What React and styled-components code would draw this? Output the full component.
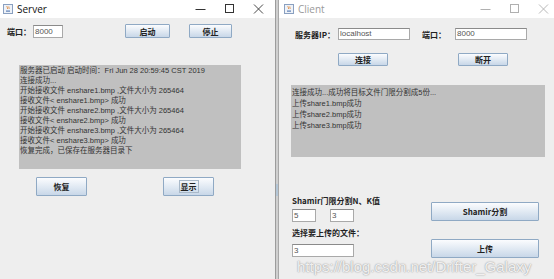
import React from "react";
import styled, { createGlobalStyle } from "styled-components";

const GlobalStyle = createGlobalStyle`
  html, body {
    margin: 0;
    padding: 0;
    background: #eeeeee;
  }
  body {
    font-family: "Liberation Sans", "Noto Sans CJK SC", sans-serif;
  }
`;

const Screen = styled.div`
  position: relative;
  width: 554px;
  height: 279px;
  display: flex;
  overflow: hidden;
  background: #eeeeee;
`;

const Window = styled.div`
  width: ${(p) => p.$width}px;
  display: flex;
  flex-direction: column;
`;

const TitleBar = styled.div`
  height: 18px;
  background: #ffffff;
  display: flex;
  align-items: center;
  padding-left: ${(p) => p.$pad}px;
  box-sizing: border-box;
`;

const TitleText = styled.span`
  margin-left: 4px;
  font-family: "Open Sans", "Liberation Sans", sans-serif;
  font-size: 10px;
  color: ${(p) => (p.$inactive ? "#9a9a9a" : "#111")};
  flex: 1;
`;

const Controls = styled.div`
  display: flex;
  align-items: center;
  gap: 18px;
  margin-right: ${(p) => p.$right}px;
`;

const Body = styled.div`
  flex: 1;
  background: #eeeeee;
  display: flex;
  flex-direction: column;
`;

const Divider = styled.div`
  width: 4px;
  background: #cfcfcf;
  border-left: 1px solid #9c9c9c;
  border-right: 1px solid #a8a8a8;
  box-sizing: border-box;
  display: flex;
  flex-direction: column;
`;

const DividerMark = styled.div`
  margin-top: 184px;
  height: 12px;
  background: #b4c6d6;
`;

const Row = styled.div`
  display: flex;
  align-items: center;
  margin-top: ${(p) => p.$top || 0}px;
  padding-left: ${(p) => p.$left || 0}px;
`;

const Label = styled.span`
  font-family: "Noto Sans CJK SC", sans-serif;
  font-weight: 700;
  font-size: 8px;
  color: #222;
  width: ${(p) => (p.$w ? p.$w + "px" : "auto")};
  margin-left: ${(p) => p.$ml || 0}px;
  white-space: nowrap;
`;

const Field = styled.div`
  width: ${(p) => p.$w}px;
  height: ${(p) => p.$h || 12}px;
  box-sizing: border-box;
  background: #fff;
  border: 1px solid #a9a9a9;
  border-top-color: #8a8a8a;
  font-family: "Liberation Sans", sans-serif;
  font-size: 8px;
  color: #555;
  padding-left: 1px;
  line-height: ${(p) => (p.$h || 12) - 2}px;
  margin-left: ${(p) => p.$ml || 0}px;
`;

const Button = styled.div`
  width: ${(p) => p.$w}px;
  height: ${(p) => p.$h}px;
  margin-left: ${(p) => p.$ml || 0}px;
  box-sizing: border-box;
  border: 1px solid #8fa9c4;
  border-radius: 1px;
  background: linear-gradient(#fbfcfe, #dfe8f2 55%, #c8d7e8);
  display: flex;
  align-items: center;
  justify-content: center;
  font-family: "Noto Sans CJK SC", sans-serif;
  font-weight: 700;
  font-size: 8px;
  color: #222;
`;

const Focus = styled.span`
  outline: 1px solid #a8b8c8;
  padding: 0 1px;
`;

const LogArea = styled.div`
  width: ${(p) => p.$w}px;
  height: ${(p) => p.$h}px;
  margin-left: ${(p) => p.$left}px;
  margin-top: ${(p) => p.$top}px;
  background: #c0c0c0;
  padding: ${(p) => p.$pt}px 0 0 1px;
  box-sizing: border-box;
  font-family: "Liberation Sans", "Noto Sans CJK SC", sans-serif;
  font-size: 7.5px;
  line-height: ${(p) => p.$lh}px;
  color: #333;
`;

const Line = styled.div`
  white-space: nowrap;
`;

const Lower = styled.div`
  display: flex;
  margin-top: 38px;
  padding-left: 13px;
`;

const FormCol = styled.div`
  display: flex;
  flex-direction: column;
  width: 139px;
`;

const ButtonCol = styled.div`
  display: flex;
  flex-direction: column;
  gap: 18px;
  padding-top: 7px;
`;

const Watermark = styled.div`
  position: absolute;
  left: 297px;
  top: 258px;
  font-family: "Liberation Sans", sans-serif;
  font-size: 15px;
  color: rgba(255, 255, 255, 0.85);
  text-shadow: 0 0 1px #9a9a9a, 0 0 2px #b0b0b0;
  white-space: nowrap;
`;

function JavaIcon() {
  return (
    <svg width="10" height="10" viewBox="0 0 10 10">
      <rect x="0.5" y="0.5" width="9" height="9" fill="#eef2f8" stroke="#8aa0c0" />
      <path d="M3 6.5h4v1.2H3z" fill="#5b7fb5" />
      <path d="M4 2c-0.5 1 1 1.5 0.5 3M5.8 2.5c-0.4 0.8 0.7 1.2 0.3 2.4" stroke="#e07b22" strokeWidth="0.8" fill="none" />
    </svg>
  );
}

function WinControls({ inactive, right }) {
  const c = inactive ? "#b0b0b0" : "#333";
  return (
    <Controls $right={right}>
      <svg width="11" height="10" viewBox="0 0 11 10">
        <path d="M0.5 5.5h10" stroke={c} strokeWidth="1" />
      </svg>
      <svg width="11" height="10" viewBox="0 0 11 10">
        <rect x="1.5" y="0.5" width="8" height="8" fill="none" stroke={c} strokeWidth="1" />
      </svg>
      <svg width="11" height="10" viewBox="0 0 11 10">
        <path d="M1 0.5l9 9M10 0.5l-9 9" stroke={c} strokeWidth="0.9" />
      </svg>
    </Controls>
  );
}

const serverLog = [
  "服务器已启动  启动时间：Fri Jun 28 20:59:45 CST 2019",
  "连接成功...",
  "开始接收文件 enshare1.bmp ,文件大小为 265464",
  "接收文件< enshare1.bmp> 成功",
  "开始接收文件 enshare2.bmp ,文件大小为 265464",
  "接收文件< enshare2.bmp> 成功",
  "开始接收文件 enshare3.bmp ,文件大小为 265464",
  "接收文件< enshare3.bmp> 成功",
  "恢复完成，已保存在服务器目录下",
];

const clientLog = [
  "连接成功...成功将目标文件门限分割成5份...",
  "上传share1.bmp成功",
  "上传share2.bmp成功",
  "上传share3.bmp成功",
];

export default function App() {
  return (
    <>
      <GlobalStyle />
      <Screen>
        <Window $width={275}>
          <TitleBar $pad={3}>
            <JavaIcon />
            <TitleText>Server</TitleText>
            <WinControls right={11} />
          </TitleBar>
          <Body>
            <Row $top={6} $left={7}>
              <Label $w={26}>端口：</Label>
              <Field $w={30} $h={13}>8000</Field>
              <Button $w={45} $h={14} $ml={62}>启动</Button>
              <Button $w={43} $h={14} $ml={19}>停止</Button>
            </Row>
            <LogArea $w={222} $h={104} $left={19} $top={27} $pt={1} $lh={10}>
              {serverLog.map((l, i) => (
                <Line key={i}>{l}</Line>
              ))}
            </LogArea>
            <Row $top={8} $left={36}>
              <Button $w={51} $h={19}>恢复</Button>
              <Button $w={51} $h={19} $ml={76}>
                <Focus>显示</Focus>
              </Button>
            </Row>
          </Body>
        </Window>
        <Divider>
          <DividerMark />
        </Divider>
        <Window $width={275}>
          <TitleBar $pad={5}>
            <JavaIcon />
            <TitleText $inactive>Client</TitleText>
            <WinControls inactive right={5} />
          </TitleBar>
          <Body>
            <Row $top={10} $left={16}>
              <Label $w={43}>服务器IP：</Label>
              <Field $w={72} $h={12}>localhost</Field>
              <Label $w={33} $ml={12}>端口：</Label>
              <Field $w={72} $h={12}>8000</Field>
            </Row>
            <Row $top={13} $left={59}>
              <Button $w={50} $h={13}>连接</Button>
              <Button $w={50} $h={13} $ml={70}>断开</Button>
            </Row>
            <LogArea $w={254} $h={72} $left={12} $top={19} $pt={2} $lh={11}>
              {clientLog.map((l, i) => (
                <Line key={i}>{l}</Line>
              ))}
            </LogArea>
            <Lower>
              <FormCol>
                <Label>Shamir门限分割N、K值</Label>
                <Row $top={3}>
                  <Field $w={24} $h={13}>5</Field>
                  <Field $w={24} $h={13} $ml={14}>3</Field>
                </Row>
                <Row $top={5}>
                  <Label>选择要上传的文件：</Label>
                </Row>
                <Row $top={6}>
                  <Field $w={62} $h={13}>3</Field>
                </Row>
              </FormCol>
              <ButtonCol>
                <Button $w={108} $h={19}>Shamir分割</Button>
                <Button $w={108} $h={19}>上传</Button>
              </ButtonCol>
            </Lower>
          </Body>
        </Window>
        <Watermark>https://blog.csdn.net/Drifter_Galaxy</Watermark>
      </Screen>
    </>
  );
}
